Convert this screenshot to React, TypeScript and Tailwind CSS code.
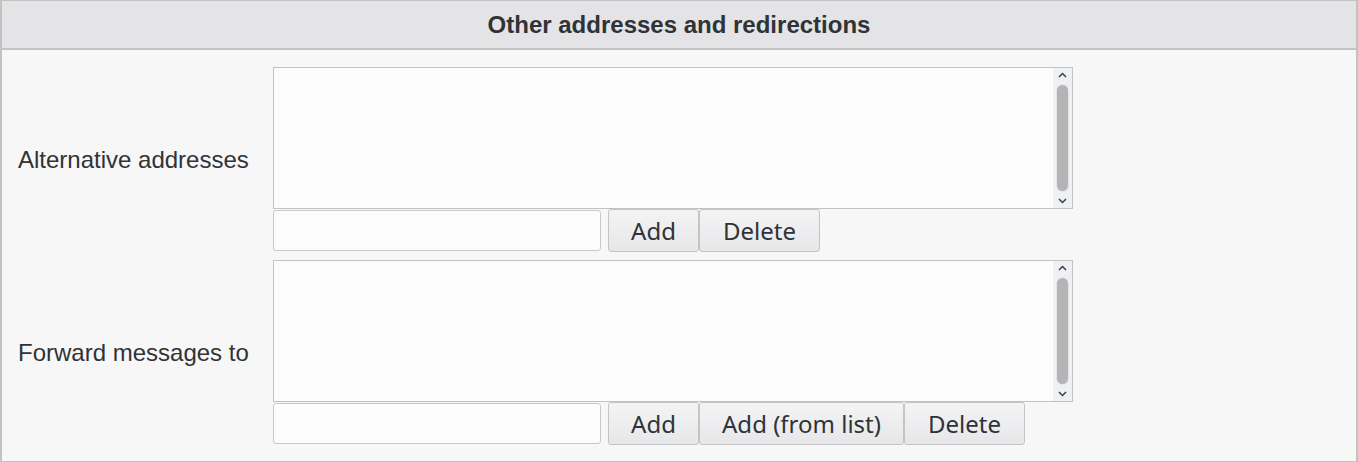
import type { ReactNode } from 'react';

/* ---------- 小物 ---------- */
function ScrollBox() {
  return (
    <div className="flex h-[142px] w-[800px] border border-[#c2c2c2] bg-[#fcfcfc]">
      <div className="flex-1" />
      {/* 擬似スクロールバー */}
      <div className="flex w-[19px] flex-col items-center bg-[#eef0f3]">
        <svg width="9" height="6" viewBox="0 0 9 6" className="mt-[4px]">
          <path d="M1 5 L4.5 1.5 L8 5" fill="none" stroke="#3c3f43" strokeWidth="1.5" />
        </svg>
        <div className="mb-[2px] mt-[7px] w-[11px] flex-1 rounded-full bg-[#b4b4b4] ring-1 ring-[#e4e6ea]" />
        <svg width="9" height="6" viewBox="0 0 9 6" className="mb-[4px] mt-[5px]">
          <path d="M1 1 L4.5 4.5 L8 1" fill="none" stroke="#3c3f43" strokeWidth="1.5" />
        </svg>
      </div>
    </div>
  );
}

function Btn({ children, w }: { children: ReactNode; w: string }) {
  return (
    <button
      type="button"
      className={`h-[43px] ${w} rounded-[3px] border border-[#c4c4c4] bg-gradient-to-b from-[#f4f4f5] to-[#e6e7e9] font-['Noto_Sans',sans-serif] text-[24px] leading-none text-[#2f3337]`}
    >
      {children}
    </button>
  );
}

type Row = { label: string; buttons: { text: string; w: string }[] };

const rows: Row[] = [
  {
    label: 'Alternative addresses',
    buttons: [
      { text: 'Add', w: 'w-[91px]' },
      { text: 'Delete', w: 'w-[121px]' },
    ],
  },
  {
    label: 'Forward messages to',
    buttons: [
      { text: 'Add', w: 'w-[91px]' },
      { text: 'Add (from list)', w: 'w-[205px]' },
      { text: 'Delete', w: 'w-[121px]' },
    ],
  },
];

export default function App() {
  return (
    <div className="h-[462px] w-[1358px] border-x-2 border-y border-[#c2c2c2] bg-[#f7f7f7] font-['Liberation_Sans',Arial,sans-serif] text-[#2f3337]">
      {/* ヘッダー */}
      <div className="flex h-[49px] items-center justify-center border-b-2 border-[#c4c4c4] bg-[#e4e4e6] pt-[1px] text-[24px] font-bold">
        Other addresses and redirections
      </div>

      {/* 本体 */}
      <div className="flex flex-col gap-[8px] pt-[17px]">
        {rows.map((row) => (
          <div key={row.label} className="flex items-center">
            <div className="w-[271px] pl-[16px] text-[24px]">{row.label}</div>
            <div className="flex flex-col">
              <ScrollBox />
              <div className="flex items-center">
                <div className="mr-[7px] h-[41px] w-[328px] rounded-[3px] border border-[#c8c8c8] bg-[#fcfcfc]" />
                {row.buttons.map((b, i) => (
                  <Btn key={i} w={b.w}>
                    {b.text}
                  </Btn>
                ))}
              </div>
            </div>
          </div>
        ))}
      </div>
    </div>
  );
}
